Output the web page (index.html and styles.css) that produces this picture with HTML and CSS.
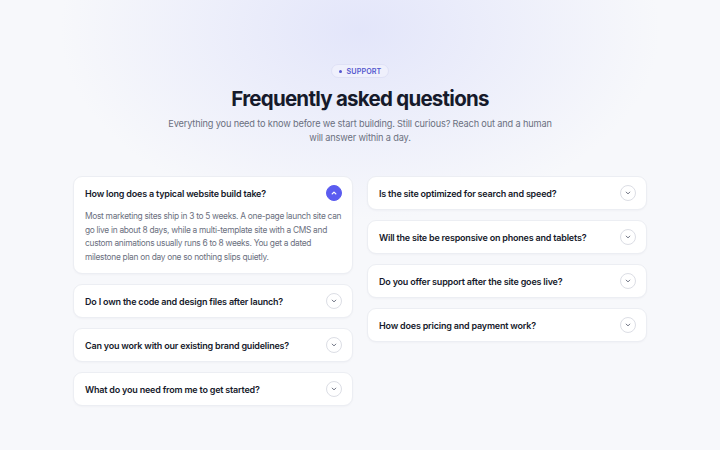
FILE: index.html
```html
<!DOCTYPE html>
<html>

<head>
  <meta charset="utf-8">
  <meta name="viewport" content="width=device-width, initial-scale=1">
  <title>FAQ</title>
  <link rel="stylesheet" href="styles.css">
</head>

<body>
  <section class="faq">
    <div class="faq-head">
      <span class="badge"><i class="dot"></i>SUPPORT</span>
      <h1>Frequently asked questions</h1>
      <p class="lead">Everything you need to know before we start building. Still curious? Reach out and a human will answer within a day.</p>
    </div>

    <div class="faq-grid">
      <div class="faq-col">
        <div class="item open">
          <div class="q">
            <span>How long does a typical website build take?</span>
            <span class="toggle">
              <svg viewBox="0 0 10 10"><path d="M3.2 5.9 5 4.1l1.8 1.8"/></svg>
            </span>
          </div>
          <p class="a">Most marketing sites ship in 3 to 5 weeks. A one-page launch site can go live in about 8 days, while a multi-template site with a CMS and custom animations usually runs 6 to 8 weeks. You get a dated milestone plan on day one so nothing slips quietly.</p>
        </div>
        <div class="item">
          <div class="q">
            <span>Do I own the code and design files after launch?</span>
            <span class="toggle"><svg viewBox="0 0 10 10"><path d="M3.2 4.1 5 5.9l1.8-1.8"/></svg></span>
          </div>
        </div>
        <div class="item">
          <div class="q">
            <span>Can you work with our existing brand guidelines?</span>
            <span class="toggle"><svg viewBox="0 0 10 10"><path d="M3.2 4.1 5 5.9l1.8-1.8"/></svg></span>
          </div>
        </div>
        <div class="item">
          <div class="q">
            <span>What do you need from me to get started?</span>
            <span class="toggle"><svg viewBox="0 0 10 10"><path d="M3.2 4.1 5 5.9l1.8-1.8"/></svg></span>
          </div>
        </div>
      </div>

      <div class="faq-col">
        <div class="item">
          <div class="q">
            <span>Is the site optimized for search and speed?</span>
            <span class="toggle"><svg viewBox="0 0 10 10"><path d="M3.2 4.1 5 5.9l1.8-1.8"/></svg></span>
          </div>
        </div>
        <div class="item">
          <div class="q">
            <span>Will the site be responsive on phones and tablets?</span>
            <span class="toggle"><svg viewBox="0 0 10 10"><path d="M3.2 4.1 5 5.9l1.8-1.8"/></svg></span>
          </div>
        </div>
        <div class="item">
          <div class="q">
            <span>Do you offer support after the site goes live?</span>
            <span class="toggle"><svg viewBox="0 0 10 10"><path d="M3.2 4.1 5 5.9l1.8-1.8"/></svg></span>
          </div>
        </div>
        <div class="item">
          <div class="q">
            <span>How does pricing and payment work?</span>
            <span class="toggle"><svg viewBox="0 0 10 10"><path d="M3.2 4.1 5 5.9l1.8-1.8"/></svg></span>
          </div>
        </div>
      </div>
    </div>
  </section>
</body>
</html>
```

FILE: styles.css
```css
/* Variables */
:root {
  --accent: #5b5cf0;
  --ink: #161a2b;
  --muted: #6b7080;
  --line: #eceef3;
  --page: #f7f8fb;
}

/* Boiler Plate */
*, ::after, ::before {
  box-sizing: border-box;
  margin: 0;
  padding: 0;
}
html {
  font-family: "Inter", "Noto Sans", sans-serif;
  color: var(--ink);
}
body {
  min-height: 450px;
  background:
    radial-gradient(ellipse 300px 190px at 360px 30px, rgba(222, 225, 250, 0.8), rgba(232, 234, 250, 0) 100%),
    var(--page);
}

/* Header */
.faq {
  padding: 64px 73px 40px;
}
.faq-head {
  display: flex;
  flex-direction: column;
  align-items: center;
  text-align: center;
}
.badge {
  display: inline-flex;
  align-items: center;
  gap: 5px;
  height: 14px;
  padding: 0 7px;
  border-radius: 7px;
  background: #eff0fc;
  border: 1px solid #dfe1f6;
  color: #5457cf;
  font-size: 7.2px;
  font-weight: 600;
  letter-spacing: 0.1px;
}
.dot {
  width: 3px;
  height: 3px;
  border-radius: 50%;
  background: #5457cf;
}
.faq-head h1 {
  margin-top: 8px;
  font-size: 20.5px;
  line-height: 26px;
  font-weight: 700;
  letter-spacing: -0.75px;
}
.lead {
  margin-top: 5px;
  width: 384px;
  font-size: 9.2px;
  line-height: 14px;
  letter-spacing: -0.15px;
  color: var(--muted);
}

/* Accordion */
.faq-grid {
  display: grid;
  grid-template-columns: 1fr 1fr;
  gap: 14px;
  margin-top: 31px;
  align-items: start;
}
.faq-col {
  display: flex;
  flex-direction: column;
  gap: 10px;
}
.item {
  background: #fff;
  border: 1px solid var(--line);
  border-radius: 9px;
  box-shadow: 0 1px 2px rgba(20, 24, 60, 0.03);
}
.q {
  display: flex;
  align-items: center;
  justify-content: space-between;
  height: 32px;
  padding: 0 10px 0 11px;
  font-size: 9px;
  font-weight: 600;
  letter-spacing: -0.2px;
}
.toggle {
  display: flex;
  align-items: center;
  justify-content: center;
  width: 16px;
  height: 16px;
  border-radius: 50%;
  border: 1px solid #dcdee5;
  background: #fff;
}
.toggle svg {
  width: 10px;
  height: 10px;
  fill: none;
  stroke: #6b7080;
  stroke-width: 1;
  stroke-linecap: round;
  stroke-linejoin: round;
}
.open .toggle {
  background: var(--accent);
  border-color: var(--accent);
}
.open .toggle svg {
  stroke: #fff;
  stroke-width: 1.3;
}
.a {
  padding: 1px 6px 9px 11px;
  font-size: 8.4px;
  line-height: 13.5px;
  letter-spacing: -0.3px;
  color: var(--muted);
}
```
